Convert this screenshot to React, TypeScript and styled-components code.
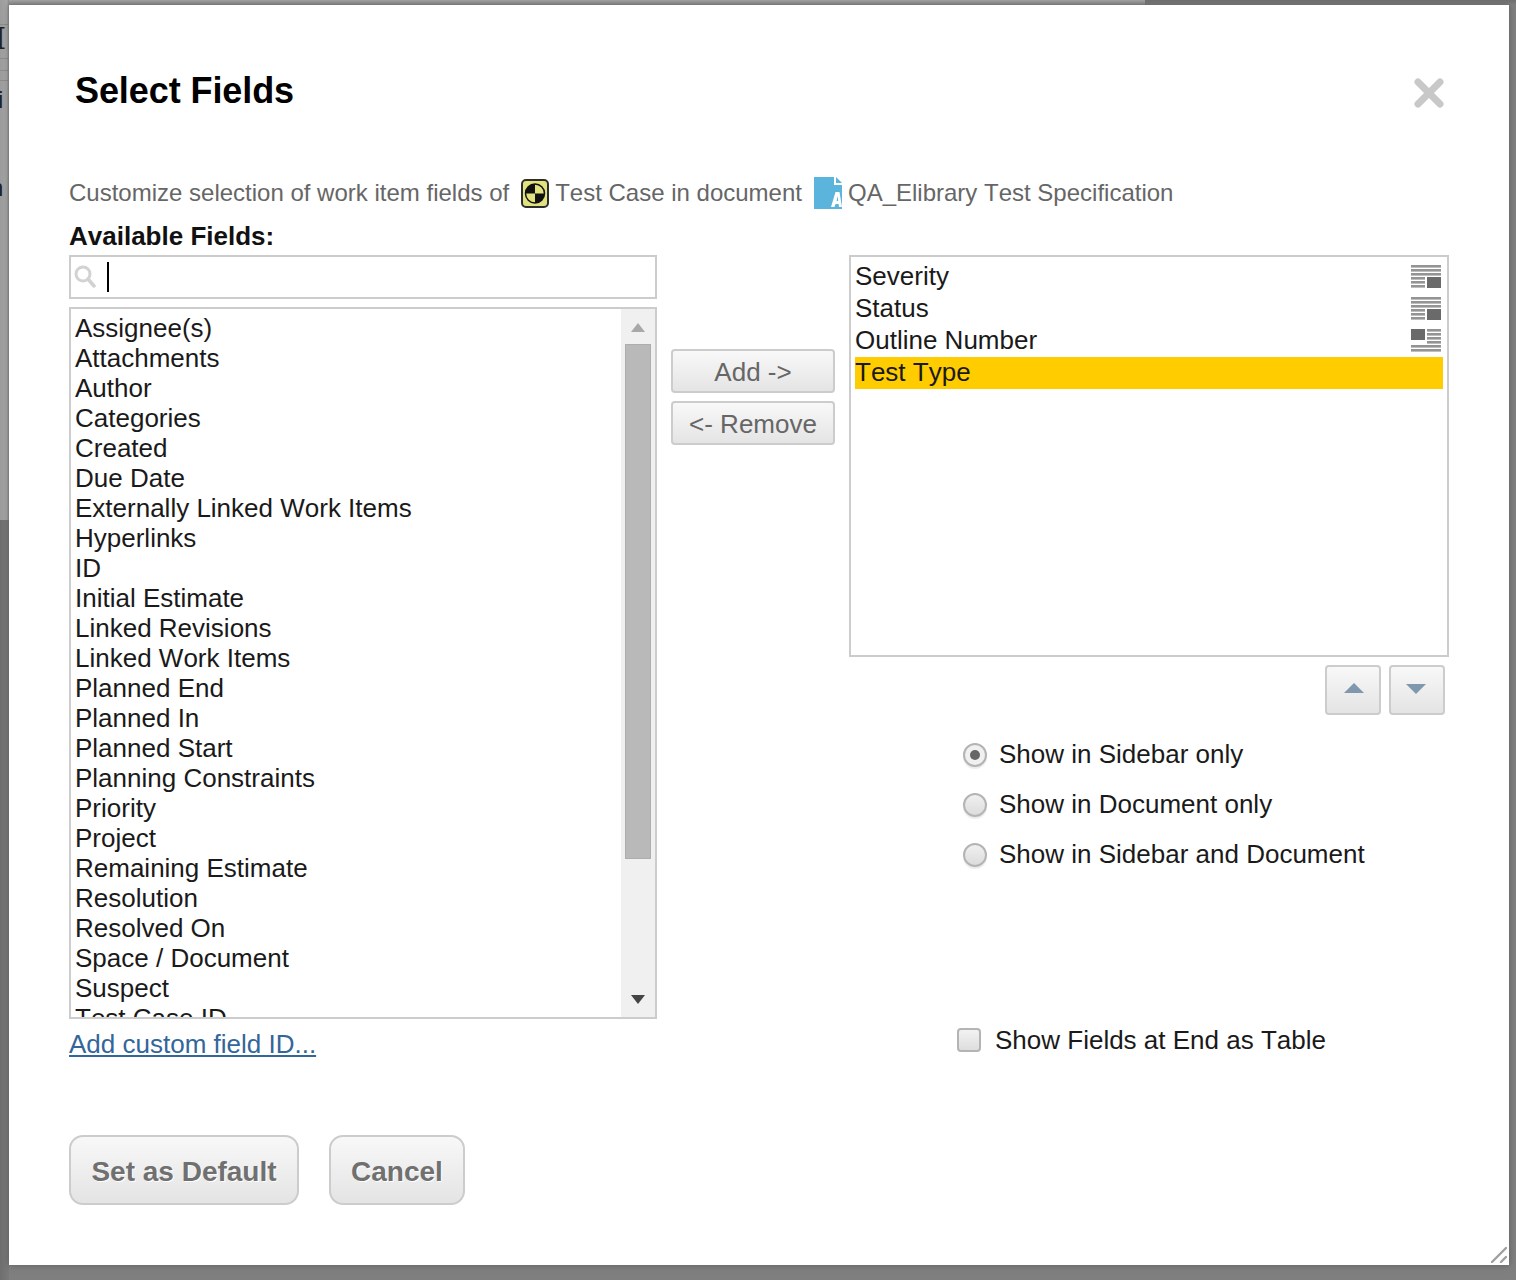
import React from "react";
import styled, { createGlobalStyle } from "styled-components";

const Global = createGlobalStyle`
  html, body { margin: 0; padding: 0; background: #7f7f7f; }
  * { box-sizing: border-box; }
`;

const Page = styled.div`
  position: relative;
  width: 1516px;
  height: 1280px;
  overflow: hidden;
  padding: 5px 7px 15px 9px;
  font-family: "Liberation Sans", Arial, sans-serif;
  font-kerning: none;
  background:
    linear-gradient(#8c8c8c, #8c8c8c) 0 24px / 8px 1px no-repeat,
    linear-gradient(#8c8c8c, #8c8c8c) 0 58px / 8px 1px no-repeat,
    linear-gradient(#8c8c8c, #8c8c8c) 0 70px / 8px 1px no-repeat,
    linear-gradient(#8c8c8c, #8c8c8c) 0 80px / 8px 1px no-repeat,
    linear-gradient(90deg, #9c9c9c 0, #a6a6a6 7px, #8a8a8a 9px) 0 0 / 9px 520px no-repeat,
    linear-gradient(90deg, #6e6e6e 0, #7a7a7a 9px) 0 520px / 9px 760px no-repeat,
    linear-gradient(180deg, #a4a4a4 0, #8a8a8a 5px) 0 0 / 1145px 5px no-repeat,
    linear-gradient(180deg, #6f6f6f 0, #808080 5px) 1145px 0 / 371px 5px no-repeat,
    #7f7f7f;
`;

const BackGlyph = styled.span<{ $top: number; $left: number }>`
  position: absolute;
  left: ${(p) => p.$left}px;
  top: ${(p) => p.$top}px;
  font-size: 24px;
  line-height: 28px;
  color: #222;
`;

const Dialog = styled.div`
  position: relative;
  display: flex;
  flex-direction: column;
  width: 1500px;
  height: 1260px;
  padding: 0 60px;
  background: #fff;
  box-shadow: 0 0 6px rgba(60, 60, 60, 0.5);
`;

const Header = styled.header`
  display: flex;
  align-items: center;
  justify-content: space-between;
  height: 174px;
  padding: 65px 5px 67px 6px;
`;

const Title = styled.h1`
  margin: 0;
  font-size: 36px;
  line-height: 42px;
  font-weight: 700;
  letter-spacing: -0.08px;
  color: #000;
`;

const CloseButton = styled.svg`
  display: block;
  width: 30px;
  height: 30px;
  margin-top: 4px;
`;

const Intro = styled.div`
  display: flex;
  align-items: center;
  height: 28px;
  font-size: 24px;
  line-height: 28px;
  color: #666;
  white-space: pre;
`;

const IntroIcon = styled.svg<{ $l: number; $r: number }>`
  display: block;
  flex: none;
  margin: 0 ${(p) => p.$r}px 0 ${(p) => p.$l}px;
`;

const SectionLabel = styled.div`
  margin-top: 15px;
  margin-bottom: 5px;
  height: 28px;
  font-size: 26px;
  line-height: 28px;
  font-weight: 700;
  color: #111;
`;

const Columns = styled.div`
  display: grid;
  grid-template-columns: 588px 164px 600px;
  column-gap: 14px;
  align-items: start;
`;

const Column = styled.div`
  display: flex;
  flex-direction: column;
`;

const SearchBox = styled.div`
  display: flex;
  align-items: center;
  height: 44px;
  padding-left: 3px;
  border: 2px solid #ccc;
  background: #fff;
`;

const Caret = styled.span`
  display: block;
  width: 2px;
  height: 30px;
  margin-left: 11px;
  background: #000;
`;

const AvailableBox = styled.div`
  display: flex;
  height: 712px;
  margin-top: 8px;
  border: 2px solid #ccc;
  background: #fff;
`;

const AvailableList = styled.ul`
  flex: 1;
  margin: 0;
  padding: 4px 0 0 4px;
  overflow: hidden;
  list-style: none;
`;

const AvailableRow = styled.li`
  height: 30px;
  font-size: 26px;
  line-height: 30px;
  color: #1a1a1a;
  white-space: nowrap;
`;

const Scrollbar = styled.div`
  display: flex;
  flex-direction: column;
  align-items: center;
  flex: none;
  width: 34px;
  background: #f0f0f0;
`;

const ScrollArrow = styled.svg<{ $h: number }>`
  display: block;
  flex: none;
  width: 14px;
  height: ${(p) => p.$h}px;
`;

const ScrollThumb = styled.div`
  flex: none;
  width: 26px;
  height: 515px;
  background: #b9b9b9;
  border: 1px solid #adadad;
`;

const ScrollSpacer = styled.div`
  flex: 1;
`;

const CustomLink = styled.a`
  display: block;
  margin-top: 10px;
  font-size: 26px;
  line-height: 30px;
  color: #336699;
  text-decoration: underline;
  width: fit-content;
`;

const MiddleColumn = styled.div`
  display: flex;
  flex-direction: column;
  gap: 8px;
  padding-top: 94px;
`;

const TransferButton = styled.button`
  height: 44px;
  padding: 2px 0 0;
  border: 2px solid #ccc;
  border-radius: 4px;
  background: linear-gradient(180deg, #f8f8f8 0%, #e4e4e4 100%);
  font-family: inherit;
  font-kerning: none;
  font-size: 26px;
  line-height: 30px;
  color: #666;
`;

const SelectedBox = styled.div`
  height: 402px;
  padding: 4px;
  border: 2px solid #ccc;
  background: #fff;
`;

const SelectedRow = styled.div<{ $active?: boolean }>`
  display: flex;
  align-items: center;
  justify-content: space-between;
  height: 32px;
  padding: 0 2px 2px 0;
  font-size: 26px;
  line-height: 32px;
  color: #1a1a1a;
  background: ${(p) => (p.$active ? "#ffcc00" : "transparent")};
`;

const FieldGlyph = styled.svg`
  display: block;
  flex: none;
  margin-top: 2px;
`;

const OrderRow = styled.div`
  display: flex;
  justify-content: flex-end;
  gap: 8px;
  margin-top: 8px;
  padding-right: 4px;
`;

const OrderButton = styled.button<{ $up?: boolean }>`
  display: flex;
  align-items: center;
  justify-content: center;
  width: 56px;
  height: 50px;
  padding: ${(p) => (p.$up ? "0 0 4px 2px" : "0 2px 2px 0")};
  border: 2px solid #ccc;
  border-radius: 4px;
  background: linear-gradient(180deg, #f8f8f8 0%, #e4e4e4 100%);
`;

const RadioGroup = styled.div`
  display: flex;
  flex-direction: column;
  gap: 20px;
  margin-top: 25px;
  padding-left: 114px;
`;

const OptionRow = styled.label`
  display: flex;
  align-items: center;
  gap: 12px;
  height: 30px;
  padding-bottom: 2px;
  font-size: 26px;
  line-height: 30px;
  color: #1a1a1a;
`;

const RadioMark = styled.span<{ $on?: boolean }>`
  display: flex;
  align-items: center;
  justify-content: center;
  flex: none;
  width: 24px;
  height: 24px;
  margin-top: 2px;
  border: 2px solid #b4b4b4;
  border-radius: 50%;
  background: ${(p) =>
    p.$on ? "#f0f0f0" : "linear-gradient(180deg, #f0f0f0 0%, #dcdcdc 100%)"};
  box-shadow: 0 2px 1px rgba(0, 0, 0, 0.08);

  &::after {
    content: "";
    display: ${(p) => (p.$on ? "block" : "none")};
    width: 10px;
    height: 10px;
    border-radius: 50%;
    background: #666;
  }
`;

const CheckRow = styled(OptionRow)`
  gap: 14px;
  margin-top: 155px;
  padding: 0 0 0 108px;
`;

const CheckMark = styled.span`
  flex: none;
  width: 24px;
  height: 24px;
  border: 2px solid #b4b4b4;
  border-radius: 4px;
  background: linear-gradient(180deg, #f2f2f2 0%, #dedede 100%);
`;

const Footer = styled.div`
  display: flex;
  gap: 30px;
  margin-top: 76px;
`;

const FooterButton = styled.button<{ $w: number }>`
  width: ${(p) => p.$w}px;
  height: 70px;
  padding: 4px 0 0;
  border: 2px solid #ccc;
  border-radius: 14px;
  background: linear-gradient(180deg, #f8f8f8 0%, #e4e4e4 100%);
  font-family: inherit;
  font-kerning: none;
  font-size: 28px;
  font-weight: 700;
  line-height: 32px;
  color: #707070;
  text-shadow: 1px 1px 0 #fff;
`;

const Grip = styled.svg`
  position: absolute;
  right: 2px;
  bottom: 2px;
  width: 16px;
  height: 16px;
`;

const available = [
  "Assignee(s)", "Attachments", "Author", "Categories", "Created", "Due Date",
  "Externally Linked Work Items", "Hyperlinks", "ID", "Initial Estimate",
  "Linked Revisions", "Linked Work Items", "Planned End", "Planned In",
  "Planned Start", "Planning Constraints", "Priority", "Project",
  "Remaining Estimate", "Resolution", "Resolved On", "Space / Document",
  "Suspect", "Test Case ID",
];

const FieldIcon = ({ left }: { left?: boolean }) => {
  const full = left ? [17, 21] : [1, 5, 9];
  const short = left ? [1, 5, 9, 13] : [13, 17, 21];
  return (
    <FieldGlyph width="30" height="24" viewBox="0 0 30 24">
      {full.map((y) => (
        <rect key={y} x="0" y={y - 1} width="30" height="2.6" fill="#949494" />
      ))}
      {short.map((y) => (
        <rect key={y} x={left ? 16 : 0} y={y - 1} width="14" height="2.6" fill="#949494" />
      ))}
      <rect x={left ? 0 : 16} y={left ? 0 : 12} width="14" height="11" fill="#6a6a6a" />
    </FieldGlyph>
  );
};

export default function App() {
  return (
    <Page>
      <Global />
      <BackGlyph $top={22} $left={-2}>[</BackGlyph>
      <BackGlyph $top={86} $left={-2}>i</BackGlyph>
      <BackGlyph $top={174} $left={-10}>n</BackGlyph>
      <Dialog>
        <Header>
          <Title>Select Fields</Title>
          <CloseButton viewBox="0 0 30 30">
            <path d="M4 4 L26 26 M26 4 L4 26" stroke="#c8c8c8" strokeWidth="7" strokeLinecap="round" />
          </CloseButton>
        </Header>

        <Intro>
          Customize selection of work item fields of
          <IntroIcon $l={12} $r={6} width="28" height="29" viewBox="0 0 28 29">
            <rect x="1" y="1" width="26" height="27" rx="4" fill="#e2e27e" stroke="#2e2e2e" strokeWidth="2" />
            <circle cx="14" cy="14.5" r="9.5" fill="#e2e27e" stroke="#111" strokeWidth="1.5" />
            <path d="M14 14.5 V5 A9.5 9.5 0 0 0 4.5 14.5 Z" fill="#111" />
            <path d="M14 14.5 V24 A9.5 9.5 0 0 0 23.5 14.5 Z" fill="#111" />
          </IntroIcon>
          Test Case in document
          <IntroIcon $l={12} $r={6} width="28" height="32" viewBox="0 0 28 32">
            <path d="M0 0 H20 V8 H28 V32 H0 Z" fill="#5ab4dc" />
            <path d="M22 0 L28 6 H22 Z" fill="#5ab4dc" />
            <path fillRule="evenodd" d="M17 30 L21.5 15 H25.5 L28 30 H25 L24.6 27 H21.6 L20.4 30 Z M22.6 24 H24.2 L23.8 19 Z" fill="#fff" />
          </IntroIcon>
          QA_Elibrary Test Specification
        </Intro>

        <SectionLabel>Available Fields:</SectionLabel>

        <Columns>
          <Column>
            <SearchBox>
              <svg width="22" height="26" viewBox="0 0 22 26">
                <circle cx="9" cy="10" r="7" fill="none" stroke="#d2d2d2" strokeWidth="3" />
                <path d="M14 15 L20 22" stroke="#d2d2d2" strokeWidth="3.5" strokeLinecap="round" />
              </svg>
              <Caret />
            </SearchBox>
            <AvailableBox>
              <AvailableList>
                {available.map((f) => (
                  <AvailableRow key={f}>{f}</AvailableRow>
                ))}
              </AvailableList>
              <Scrollbar>
                <ScrollArrow $h={35} viewBox="0 0 14 35">
                  <path d="M0 23 L7 14 L14 23 Z" fill="#a8a8a8" />
                </ScrollArrow>
                <ScrollThumb />
                <ScrollSpacer />
                <ScrollArrow $h={24} viewBox="0 0 14 24">
                  <path d="M0 2 L14 2 L7 11 Z" fill="#444" />
                </ScrollArrow>
              </Scrollbar>
            </AvailableBox>
            <CustomLink href="#">Add custom field ID...</CustomLink>
          </Column>

          <MiddleColumn>
            <TransferButton>Add -&gt;</TransferButton>
            <TransferButton>&lt;- Remove</TransferButton>
          </MiddleColumn>

          <Column>
            <SelectedBox>
              <SelectedRow>Severity<FieldIcon /></SelectedRow>
              <SelectedRow>Status<FieldIcon /></SelectedRow>
              <SelectedRow>Outline Number<FieldIcon left /></SelectedRow>
              <SelectedRow $active>Test Type</SelectedRow>
            </SelectedBox>
            <OrderRow>
              <OrderButton $up>
                <svg width="20" height="10" viewBox="0 0 20 10"><path d="M0 10 L10 0 L20 10 Z" fill="#7f98ae" /></svg>
              </OrderButton>
              <OrderButton>
                <svg width="20" height="10" viewBox="0 0 20 10"><path d="M0 0 L20 0 L10 10 Z" fill="#7f98ae" /></svg>
              </OrderButton>
            </OrderRow>
            <RadioGroup>
              <OptionRow><RadioMark $on />Show in Sidebar only</OptionRow>
              <OptionRow><RadioMark />Show in Document only</OptionRow>
              <OptionRow><RadioMark />Show in Sidebar and Document</OptionRow>
            </RadioGroup>
            <CheckRow><CheckMark />Show Fields at End as Table</CheckRow>
          </Column>
        </Columns>

        <Footer>
          <FooterButton $w={230}>Set as Default</FooterButton>
          <FooterButton $w={136}>Cancel</FooterButton>
        </Footer>

        <Grip viewBox="0 0 16 16">
          <path d="M1 15 L15 1 M10 15 L15 10" stroke="#a0a0a0" strokeWidth="2.4" strokeLinecap="round" />
        </Grip>
      </Dialog>
    </Page>
  );
}
